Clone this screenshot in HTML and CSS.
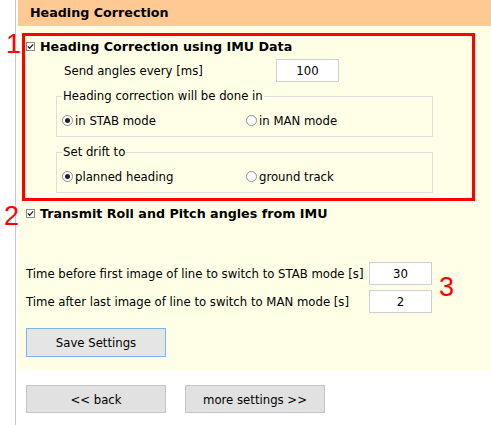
FILE: index.html
```html
<!DOCTYPE html>
<html>
<head>
<meta charset="utf-8">
<link rel="stylesheet" href="styles.css">
</head>
<body>
<div class="frame">
  <div class="main">
    <div class="header">Heading Correction</div>
    <div class="panel">
      <div class="box">
        <div class="check-row"><span class="cb"><svg viewBox="0 0 9 9" width="9" height="9"><path d="M1.8 4.4 L3.6 6.2 L7.2 2.4" fill="none" stroke="#222" stroke-width="1.3"/></svg></span><span class="bold">Heading Correction using IMU Data</span></div>
        <div class="send-row"><span class="send-label">Send angles every [ms]</span><span class="input">100</span></div>
        <fieldset class="group">
          <legend>Heading correction will be done in</legend>
          <div class="radios">
            <span class="opt"><span class="radio on"></span>in STAB mode</span>
            <span class="opt"><span class="radio"></span>in MAN mode</span>
          </div>
        </fieldset>
        <fieldset class="group second">
          <legend>Set drift to</legend>
          <div class="radios">
            <span class="opt"><span class="radio on"></span>planned heading</span>
            <span class="opt"><span class="radio"></span>ground track</span>
          </div>
        </fieldset>
      </div>
      <div class="check-row transmit"><span class="cb"><svg viewBox="0 0 9 9" width="9" height="9"><path d="M1.8 4.4 L3.6 6.2 L7.2 2.4" fill="none" stroke="#222" stroke-width="1.3"/></svg></span><span class="bold">Transmit Roll and Pitch angles from IMU</span></div>
      <div class="time-row first"><span class="time-label">Time before first image of line to switch to STAB mode [s]</span><span class="input">30</span></div>
      <div class="time-row"><span class="time-label">Time after last image of line to switch to MAN mode [s]</span><span class="input">2</span></div>
      <button class="btn save">Save Settings</button>
    </div>
    <div class="nav">
      <button class="btn">&lt;&lt; back</button>
      <button class="btn">more settings &gt;&gt;</button>
    </div>
  </div>
  <span class="mark m1">1</span>
  <span class="mark m2">2</span>
  <span class="mark m3">3</span>
</div>
</body>
</html>
```
FILE: styles.css
```css
html, body {
  margin: 0;
  padding: 0;
  background: #ffffff;
}
body {
  font-family: "DejaVu Sans Condensed", "DejaVu Sans", sans-serif;
  font-stretch: condensed;
  font-size: 13px;
  color: #000;
}
.frame {
  position: relative;
  width: 491px;
  height: 425px;
  padding-left: 15px;
  box-sizing: border-box;
  overflow: hidden;
}
.main {
  border-left: 1px solid #c9c9c9;
  padding-left: 2px;
  height: 425px;
}
.header {
  height: 26px;
  line-height: 26px;
  background: #ffc993;
  padding-left: 12px;
  font-family: "DejaVu Sans", sans-serif;
  font-stretch: normal;
  font-weight: bold;
  font-size: 12.7px;
}
.panel {
  height: 344px;
  box-sizing: border-box;
  background: #ffffe7;
  padding-top: 7px;
  display: flex;
  flex-direction: column;
  align-items: flex-start;
}
.box {
  margin-left: 4px;
  width: 453px;
  box-sizing: border-box;
  border: 3px solid #ff0000;
  padding: 0 0 5px 1px;
}
.check-row {
  height: 20px;
  display: flex;
  align-items: center;
}
.cb {
  width: 9px;
  height: 9px;
  border: 1px solid #8a8a8a;
  box-sizing: border-box;
  background: #fff;
  margin-right: 5px;
  display: flex;
}
.cb svg {
  margin: -1px;
}
.bold {
  font-family: "DejaVu Sans", sans-serif;
  font-stretch: normal;
  font-weight: bold;
  font-size: 12.7px;
}
.send-row {
  margin-top: 3px;
  height: 23px;
  display: flex;
  align-items: center;
  padding-left: 38px;
}
.send-label {
  width: 212px;
  white-space: nowrap;
}
.input {
  width: 63px;
  height: 23px;
  box-sizing: border-box;
  border: 1px solid #cfcfcf;
  background: #fff;
  display: flex;
  align-items: center;
  justify-content: center;
}
.group {
  margin: 6px 0 0 30px;
  width: 377px;
  box-sizing: border-box;
  border: 1px solid #dedede;
  padding: 7px 0 7px 5px;
  min-width: 0;
}
.group.second {
  margin-top: 7px;
}
.group legend {
  padding: 0 1px;
  line-height: 16px;
}
.radios {
  display: grid;
  grid-template-columns: 184px auto;
  height: 18px;
  align-items: center;
}
.opt {
  display: flex;
  align-items: center;
  white-space: nowrap;
}
.radio {
  width: 11px;
  height: 11px;
  border-radius: 50%;
  border: 1px solid #8c8c8c;
  box-sizing: border-box;
  background: #fff;
  margin-right: 2px;
  position: relative;
}
.radio.on::after {
  content: "";
  position: absolute;
  left: 2px;
  top: 2px;
  width: 5px;
  height: 5px;
  border-radius: 50%;
  background: #222;
}
.transmit {
  margin-top: 2px;
  padding-left: 8px;
}
.time-row {
  margin-top: 5px;
  height: 23px;
  display: flex;
  align-items: center;
  padding-left: 8px;
}
.time-row.first {
  margin-top: 39px;
}
.time-label {
  width: 343px;
  white-space: nowrap;
}
.btn {
  font-family: "DejaVu Sans Condensed", "DejaVu Sans", sans-serif;
  font-stretch: condensed;
  font-size: 13px;
  color: #000;
  width: 140px;
  height: 28px;
  background: #e1e1e1;
  border: 1px solid #c4c4c4;
  border-radius: 0;
  padding: 0;
  margin: 0;
}
.save {
  margin: 15px 0 0 8px;
  height: 29px;
  background: #e5e5e5;
  border-color: #7ab4e8;
}
.nav {
  padding: 15px 0 0 8px;
  display: flex;
  gap: 19px;
}
.mark {
  position: absolute;
  font-family: "Liberation Sans", sans-serif;
  font-size: 27px;
  line-height: 27px;
  color: #ff0000;
}
.m1 { left: 6px; top: 31px; }
.m2 { left: 4px; top: 203px; }
.m3 { left: 439px; top: 274px; }
```
